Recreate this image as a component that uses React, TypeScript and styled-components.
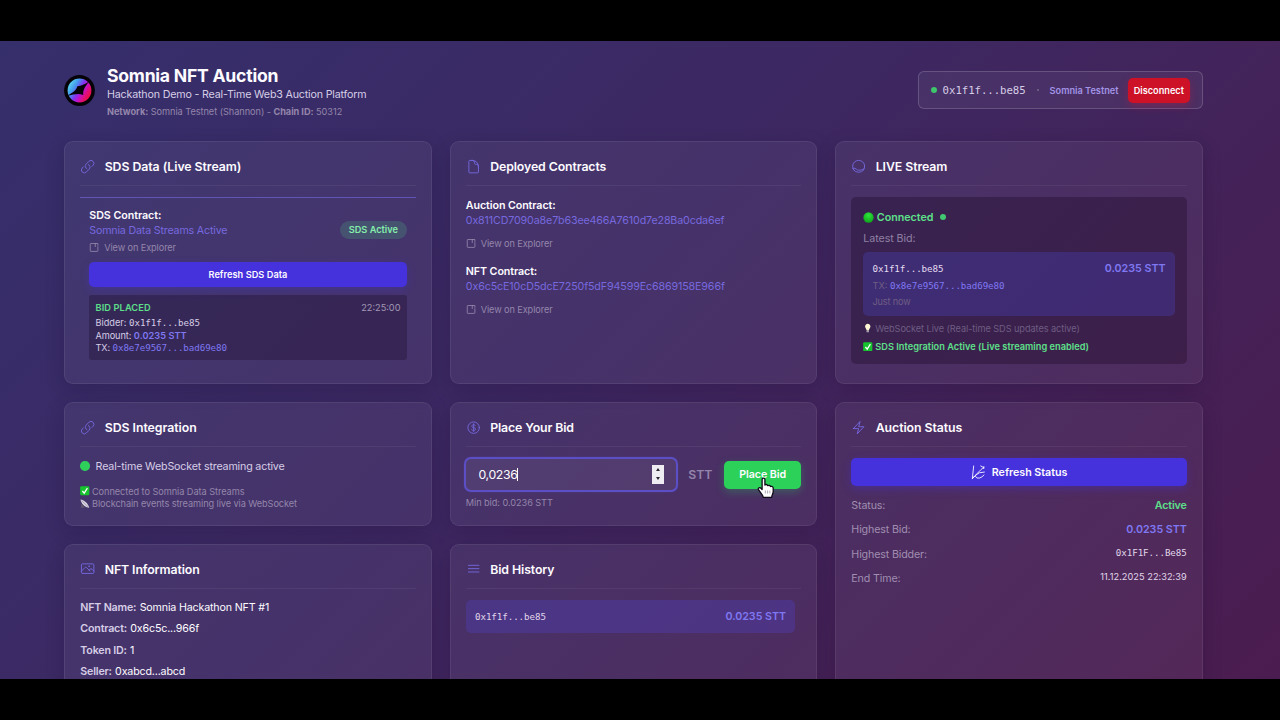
import React from "react";
import styled, { createGlobalStyle, css } from "styled-components";
import {
  HiOutlineBars3,
  HiOutlineBolt,
  HiOutlineCurrencyDollar,
  HiOutlineDocument,
  HiOutlineLink,
  HiOutlinePhoto,
} from "react-icons/hi2";

const color = {
  link: "#7669df",
  accent: "#7f78f2",
  green: "#5ee08a",
  white: "#fdfbff",
  soft: "#d6cde6",
  muted: "#9486aa",
  dim: "#6e5d83",
  indigo: "#4632dc",
};

const GlobalStyle = createGlobalStyle`
  * { box-sizing: border-box; }
  body {
    margin: 0;
    background: #000;
    font-family: Inter, "Liberation Sans", sans-serif;
    color: ${color.white};
    overflow: hidden;
  }
`;

const Letterbox = styled.div`
  height: 720px;
  padding: 41px 0;
  background: #000;
`;

const Page = styled.main`
  height: 638px;
  overflow: hidden;
  padding: 20px 77.4px 0 64.4px;
  background: linear-gradient(135deg, #352f6c 0%, #3d2862 45%, #4b1c4f 100%);
`;

const Header = styled.header`
  display: flex;
  align-items: center;
  justify-content: space-between;
  height: 58px;
  margin-bottom: 22px;
`;

const Brand = styled.div`
  display: flex;
  align-items: center;
  gap: 11.6px;
`;

const BrandText = styled.div`
  padding-top: 4px;
`;

type TextProps = {
  $size?: number;
  $weight?: number;
  $lh?: number;
  $ls?: number;
  $color?: string;
  $mono?: boolean;
};

const textStyle = css<TextProps>`
  font-size: ${(p) => p.$size ?? 10.7}px;
  font-weight: ${(p) => p.$weight ?? 400};
  letter-spacing: ${(p) => p.$ls ?? 0}px;
  color: ${(p) => p.$color ?? color.white};
  white-space: nowrap;
  ${(p) => p.$lh && css`line-height: ${p.$lh}px;`}
  ${(p) => p.$mono && css`font-family: "DejaVu Sans Mono", "Liberation Mono", monospace;`}
`;

const Line = styled.div<TextProps>`${textStyle}`;
const Span = styled.span<TextProps>`${textStyle}`;

const Title = styled.h1`
  margin: 0;
  font-size: 17.6px;
  line-height: 23px;
  font-weight: 700;
  letter-spacing: -0.24px;
`;

const Wallet = styled.div`
  display: flex;
  align-items: center;
  width: 285px;
  height: 38px;
  padding: 0 12px;
  border: 1px solid rgba(255, 255, 255, 0.17);
  border-radius: 6px;
  background: rgba(255, 255, 255, 0.05);
`;

const Dot = styled.i<{ $size: number; $color: string; $ml?: number; $mr?: number }>`
  flex: none;
  display: inline-block;
  width: ${(p) => p.$size}px;
  height: ${(p) => p.$size}px;
  margin-left: ${(p) => p.$ml ?? 0}px;
  margin-right: ${(p) => p.$mr ?? 0}px;
  border-radius: 50%;
  background: ${(p) => p.$color};
`;

const Button = styled.button<{ $bg: string; $glow: string; $h: number; $size: number; $ls?: number }>`
  display: flex;
  align-items: center;
  justify-content: center;
  gap: 7px;
  width: 100%;
  height: ${(p) => p.$h}px;
  padding: 0;
  border: 0;
  border-radius: 5px;
  background: ${(p) => p.$bg};
  box-shadow: 0 3px 9px ${(p) => p.$glow};
  color: ${color.white};
  font-family: inherit;
  font-size: ${(p) => p.$size}px;
  font-weight: 600;
  letter-spacing: ${(p) => p.$ls ?? 0}px;
  white-space: nowrap;
`;

const Disconnect = styled(Button)`
  width: 62px;
  margin-left: 9.6px;
`;

const PlaceBid = styled(Button)`
  width: 77px;
`;

const Grid = styled.div`
  display: grid;
  grid-template-columns: repeat(3, 1fr);
  grid-template-rows: 243px 123.6px 200px;
  column-gap: 18.4px;
  row-gap: 18px;
`;

const Card = styled.section<{ $tall?: boolean }>`
  min-width: 0;
  padding: 15px 14.9px;
  border: 1px solid rgba(255, 255, 255, 0.07);
  border-radius: 9px;
  background: rgba(255, 255, 255, 0.052);
  box-shadow: 0 6px 20px rgba(20, 5, 40, 0.2);
  ${(p) => p.$tall && css`grid-row: span 2;`}
`;

const CardHeader = styled.div`
  display: flex;
  align-items: center;
  gap: 9.1px;
  height: 29px;
  padding-bottom: 9px;
  margin-bottom: 11px;
  border-bottom: 1px solid rgba(255, 255, 255, 0.055);
  color: #7267da;

  svg {
    flex: none;
    width: 15.3px;
    height: 15.3px;
  }
`;

const CardTitle = styled.h2<{ $ls: number }>`
  margin: 0;
  font-size: 12.3px;
  line-height: 19px;
  font-weight: 600;
  letter-spacing: ${(p) => p.$ls}px;
  color: ${color.white};
  white-space: nowrap;
`;

const SdsSection = styled.div`
  padding: 9.5px 9px;
  border-top: 1px solid #6054b4;
`;

const Between = styled.div`
  display: flex;
  align-items: center;
  justify-content: space-between;
`;

const SdsTop = styled(Between)`
  align-items: flex-start;
  margin-bottom: 6px;
`;

const Badge = styled.span`
  margin-top: 13.400px;
  padding: 0 8.8px;
  border-radius: 9px;
  background: rgba(74, 190, 128, 0.22);
  color: #86efac;
  font-size: 9.2px;
  line-height: 18px;
  font-weight: 600;
`;

const Explorer = styled.a`
  display: flex;
  align-items: center;
  gap: 4.4px;
  height: 17px;
  font-size: 9.2px;
  letter-spacing: -0.1px;
  color: ${color.muted};
`;

const LogBox = styled.div`
  height: 65px;
  margin-top: 8px;
  padding: 5.5px 6.2px;
  border-radius: 3px;
  background: rgba(20, 8, 32, 0.29);
`;

const Contract = styled.div`
  height: 66.4px;
  padding-top: 1px;
`;

const ExplorerSpaced = styled(Explorer)`
  margin-top: 5.6px;
`;

const StreamBox = styled.div`
  height: 167px;
  padding: 11px 12px;
  border-radius: 5px;
  background: rgba(24, 4, 28, 0.31);
`;

const WithIcon = styled.div<{ $h: number; $gap: number }>`
  display: flex;
  align-items: center;
  gap: ${(p) => p.$gap}px;
  height: ${(p) => p.$h}px;
`;

const BidBox = styled.div`
  height: 64px;
  margin: 1px 0 3.4px;
  padding: 8px 9.2px;
  border-radius: 5px;
  background: rgba(70, 62, 180, 0.38);
`;

const HistoryRow = styled(Between)`
  height: 33px;
  margin: 1.4px 6px 0 0;
  padding: 0 9.2px;
  border-radius: 5px;
  background: rgba(80, 64, 190, 0.36);
`;

const Live = styled.div`
  display: flex;
  align-items: center;
  gap: 5.8px;
  height: 16px;
  margin: 0 0 11px;
`;

const BidForm = styled.div`
  display: flex;
  align-items: center;
  height: 35px;
  margin: -1px 0 3px -1.4px;
`;

const Field = styled.div`
  display: flex;
  align-items: center;
  width: 213.5px;
  height: 35px;
  padding: 0 12px;
  border: 2px solid #5c4fc6;
  border-radius: 7px;
  background: rgba(255, 255, 255, 0.055);
  box-shadow: 0 0 1px #5c4fc6;
`;

const Caret = styled.i`
  width: 1px;
  height: 13px;
  background: #fff;
`;

const Stepper = styled.div`
  display: flex;
  flex-direction: column;
  align-items: center;
  justify-content: space-between;
  width: 12px;
  height: 19px;
  margin-left: auto;
  padding: 3px 0 4px;
  background: #efedf2;
`;

const Arrow = styled.i<{ $up?: boolean }>`
  border-left: 2.5px solid transparent;
  border-right: 2.5px solid transparent;
  ${(p) => (p.$up ? "border-bottom: 3.5px solid #2a2630;" : "border-top: 3.5px solid #2a2630;")}
`;

const Unit = styled.span`
  width: 46.5px;
  padding-left: 10.6px;
  font-size: 12.3px;
  font-weight: 600;
  letter-spacing: -0.15px;
  color: #9384ab;
`;

const CursorAnchor = styled.div`
  position: relative;

  > svg {
    position: absolute;
    left: 33px;
    top: 16px;
  }
`;

const StatusTop = styled.div`
  margin: 1px 0 7.6px;
`;

const StatusRow = styled(Between)<{ $raise?: number }>`
  height: 24.25px;

  > :last-child {
    margin-bottom: ${(p) => p.$raise ?? 0}px;
  }
`;

const InfoList = styled.div`
  margin-top: -2.4px;
`;

const InfoRow = styled.div`
  display: flex;
  align-items: center;
  gap: 3.3px;
  height: 21.15px;
`;

const Logo = () => (
  <svg width="31" height="31" viewBox="0 0 31 31">
    <defs>
      <linearGradient id="disc" gradientUnits="userSpaceOnUse" x1="5" y1="7" x2="26" y2="20">
        <stop offset="0.05" stopColor="#58d2ee" />
        <stop offset="0.3" stopColor="#4596ee" />
        <stop offset="0.5" stopColor="#7a3cf0" />
        <stop offset="0.66" stopColor="#bb14d4" />
        <stop offset="0.85" stopColor="#e30d78" />
        <stop offset="1" stopColor="#e8104a" />
      </linearGradient>
    </defs>
    <circle cx="15.500" cy="15.500" r="15.400" fill="#050308" />
    <circle cx="15.500" cy="15.500" r="11.900" fill="url(#disc)" />
    <path
      d="M25 6.500C20.800 12 19 14.500 19.200 20C14.500 18 9.500 19.600 3.200 20.800C9.600 17 12 15.500 13.400 11.200C17.500 11 20.500 9.400 25 6.500Z"
      fill="#050308"
    />
  </svg>
);

const OrbIcon = () => (
  <svg viewBox="0 0 24 24" fill="none" stroke="currentColor" strokeWidth="1.500" strokeLinecap="round">
    <path d="M4.500 17.500A9.500 9.500 0 1 1 19.500 17.500" />
    <path d="M2.800 14.500Q7 14 8.500 16T12 17.500H15Q18 17.500 21 14.500" />
    <path d="M4.500 17.500Q7 20.800 12 20.800T19.500 17.500" />
  </svg>
);

const OpenIcon = () => (
  <svg width="10.500" height="10.500" viewBox="0 0 21 21" fill="none" stroke="currentColor" strokeWidth="1.700">
    <path d="M14 3H3.800Q2.500 3 2.500 4.300V17.500Q2.500 18.800 3.800 18.800H16.500Q17.800 18.800 17.800 17.500V8.500" />
    <path d="M12.500 3.500V10M12 3H17.800V7.500" />
  </svg>
);

const RefreshIcon = () => (
  <svg width="14" height="15" viewBox="0 0 42 45" fill="none" stroke="#fff" strokeWidth="2.600" strokeLinecap="round" strokeLinejoin="round">
    <path d="M8 3L4 41L19 25Q27 16 39 6" />
    <path d="M29 3Q34 7 39 6L38 11" />
    <path d="M13 31Q24 20 40 21" />
    <path d="M4 41Q9 30 14 35Q17 41 26 39Q33 37 39 30" />
  </svg>
);

const CheckIcon = () => (
  <svg width="9.500" height="9.500" viewBox="0 0 18 18">
    <rect x="0.300" y="0.300" width="17.400" height="17.400" rx="2.500" fill="#16c22e" />
    <path d="M4.500 9.500L8 13.500L14 4" fill="none" stroke="#fff" strokeWidth="2.400" />
  </svg>
);

const BulbIcon = () => (
  <svg width="9.500" height="10" viewBox="0 0 18 20">
    <path d="M9 1.500A5.600 5.600 0 0 1 12.800 11Q11.800 12.300 11.500 14H6.500Q6.200 12.300 5.200 11A5.600 5.600 0 0 1 9 1.500Z" fill="#fdf6d2" />
    <rect x="6.500" y="14" width="5" height="4.500" rx="1" fill="#a8a2ae" />
  </svg>
);

const FeedIcon = () => (
  <svg width="9.500" height="9.500" viewBox="0 0 18 18">
    <path d="M1 1C7 1 15 8 17.500 16.500C10 16.500 2 9 1 1Z" fill="#d9d5e0" />
    <path d="M2.500 8L1.500 16.500H9.500Z" fill="#5d5368" />
    <path d="M3 3L15.500 15" stroke="#8d8798" strokeWidth="1.200" />
  </svg>
);

const LiveOrb = () => (
  <svg width="11" height="11" viewBox="0 0 22 22">
    <defs>
      <radialGradient id="orb" cx="0.5" cy="0.3" r="0.7">
        <stop offset="0" stopColor="#2fe53c" />
        <stop offset="1" stopColor="#0fa51c" />
      </radialGradient>
    </defs>
    <circle cx="11" cy="11" r="10.300" fill="url(#orb)" />
  </svg>
);

const HandCursor = () => (
  <svg width="18" height="22" viewBox="0 0 18 22">
    <path
      d="M5.100 2.600C5.100 0.600 7.900 0.600 7.900 2.600V8C9 7.100 10.500 7.600 10.700 8.700C11.800 7.900 13.200 8.400 13.400 9.500C14.700 8.900 16.200 9.700 16.200 11.200V14.500C16.200 16.500 15 17.500 14.700 20.300H6.300C5.900 17.800 3.200 15.500 1.500 12.600C0.700 11 2.700 9.900 3.900 11.200L5.100 12.600Z"
      fill="#fff"
      stroke="#100a18"
      strokeWidth="1.300"
      strokeLinejoin="round"
    />
    <path d="M8.300 13.500V16.500M10.600 13.500V16.500M12.900 13.500V16.500" stroke="#8a8292" strokeWidth="0.700" />
  </svg>
);

const Head = ({ icon, title, ls }: { icon: React.ReactNode; title: string; ls: number }) => (
  <CardHeader>
    {icon}
    <CardTitle $ls={ls}>{title}</CardTitle>
  </CardHeader>
);

const contracts = [
  { name: "Auction Contract:", address: "0x811CD7090a8e7b63ee466A7610d7e28Ba0cda6ef", ls: -0.137 },
  { name: "NFT Contract:", address: "0x6c5cE10cD5dcE7250f5dF94599Ec6869158E966f", ls: -0.12 },
];

const nft = [
  ["NFT Name:", "Somnia Hackathon NFT #1"],
  ["Contract:", "0x6c5c...966f"],
  ["Token ID:", "1"],
  ["Seller:", "0xabcd...abcd"],
];

export default function App() {
  return (
    <Letterbox>
      <GlobalStyle />
      <Page>
        <Header>
          <Brand>
            <Logo />
            <BrandText>
              <Title>Somnia NFT Auction</Title>
              <Line $lh={16} $ls={-0.181} $color={color.soft}>Hackathon Demo - Real-Time Web3 Auction Platform</Line>
              <Line $size={9.2} $lh={18} $ls={-0.05} $color={color.muted}>
                <b>Network:</b> Somnia Testnet (Shannon) - <b>Chain ID:</b> 50312
              </Line>
            </BrandText>
          </Brand>
          <Wallet>
            <Dot $size={6} $color="#3fc56c" $mr={6} />
            <Span $mono $ls={-0.05} $color={color.soft}>0x1f1f...be85</Span>
            <Dot $size={2} $color="#75668f" $ml={11} $mr={11} />
            <Span $size={9.2} $weight={600} $color="#a294e6">Somnia Testnet</Span>
            <Disconnect $bg="#cd1126" $glow="rgba(220,20,50,.3)" $h={25} $size={9.2}>Disconnect</Disconnect>
          </Wallet>
        </Header>

        <Grid>
          <Card>
            <Head icon={<HiOutlineLink />} title="SDS Data (Live Stream)" ls={-0.053} />
            <SdsSection>
              <SdsTop>
                <div>
                  <Line $weight={600} $lh={15.5} $ls={-0.05}>SDS Contract:</Line>
                  <Line $lh={16} $ls={-0.19} $color={color.link}>Somnia Data Streams Active</Line>
                  <Explorer>
                    <OpenIcon />
                    View on Explorer
                  </Explorer>
                </div>
                <Badge>SDS Active</Badge>
              </SdsTop>
              <Button $bg={color.indigo} $glow="rgba(70,50,220,.3)" $h={25} $size={9.2} $ls={0.055}>Refresh SDS Data</Button>
              <LogBox>
                <Between>
                  <Line $size={9.2} $weight={600} $lh={13} $ls={0.13} $color={color.green}>BID PLACED</Line>
                  <Line $size={9.2} $lh={13} $color="#a297b5">22:25:00</Line>
                </Between>
                <Line $size={9.2} $lh={17} $color={color.soft}>
                  Bidder: <Span $mono $size={9.2} $ls={-0.08} $color={color.soft}>0x1f1f...be85</Span>
                </Line>
                <Line $size={9.2} $lh={9} $ls={-0.08} $color={color.soft}>
                  Amount: <Span $size={9.2} $weight={600} $ls={0.05} $color={color.accent}>0.0235 STT</Span>
                </Line>
                <Line $size={9.2} $lh={15} $ls={-0.1} $color={color.soft}>
                  TX: <Span $mono $size={9.2} $ls={-0.08} $color={color.accent}>0x8e7e9567...bad69e80</Span>
                </Line>
              </LogBox>
            </SdsSection>
          </Card>

          <Card>
            <Head icon={<HiOutlineDocument />} title="Deployed Contracts" ls={-0.097} />
            {contracts.map((c) => (
              <Contract key={c.name}>
                <Line $weight={600} $lh={15} $ls={-0.09}>{c.name}</Line>
                <Line $lh={16} $ls={c.ls} $color={color.link}>{c.address}</Line>
                <ExplorerSpaced>
                  <OpenIcon />
                  View on Explorer
                </ExplorerSpaced>
              </Contract>
            ))}
          </Card>

          <Card>
            <Head icon={<OrbIcon />} title="LIVE Stream" ls={-0.075} />
            <StreamBox>
              <WithIcon $h={18} $gap={2.5}>
                <LiveOrb />
                <Span $weight={600} $color={color.green}>Connected</Span>
                <Dot $size={6} $color="#43c872" $ml={3.5} />
              </WithIcon>
              <Line $lh={25} $ls={-0.09} $color="#8f80a4">Latest Bid:</Line>
              <BidBox>
                <Between>
                  <Line $mono $size={9.2} $lh={17} $ls={-0.08} $color="#e4dcf0">0x1f1f...be85</Line>
                  <Line $weight={600} $lh={17} $color={color.accent}>0.0235 STT</Line>
                </Between>
                <Line $size={9.2} $lh={17} $color={color.dim}>
                  TX: <Span $mono $size={9.2} $ls={-0.08} $color={color.accent}>0x8e7e9567...bad69e80</Span>
                </Line>
                <Line $size={9.2} $lh={15} $ls={-0.17} $color={color.dim}>Just now</Line>
              </BidBox>
              <WithIcon $h={18} $gap={2.4}>
                <BulbIcon />
                <Span $size={9.2} $ls={-0.067} $color={color.dim}>WebSocket Live (Real-time SDS updates active)</Span>
              </WithIcon>
              <WithIcon $h={18} $gap={2.4}>
                <CheckIcon />
                <Span $size={9.2} $weight={600} $ls={0.036} $color={color.green}>SDS Integration Active (Live streaming enabled)</Span>
              </WithIcon>
            </StreamBox>
          </Card>

          <Card>
            <Head icon={<HiOutlineLink />} title="SDS Integration" ls={-0.03} />
            <Live>
              <Dot $size={9.5} $color="#2fcf5b" />
              <Span $ls={-0.17} $color={color.soft}>Real-time WebSocket streaming active</Span>
            </Live>
            <WithIcon $h={12} $gap={2.2}>
              <CheckIcon />
              <Span $size={9.2} $ls={-0.057} $color={color.muted}>Connected to Somnia Data Streams</Span>
            </WithIcon>
            <WithIcon $h={12.5} $gap={2.2}>
              <FeedIcon />
              <Span $size={9.2} $ls={-0.083} $color={color.muted}>Blockchain events streaming live via WebSocket</Span>
            </WithIcon>
          </Card>

          <Card>
            <Head icon={<HiOutlineCurrencyDollar />} title="Place Your Bid" ls={-0.12} />
            <BidForm>
              <Field>
                <Span $size={12.3} $ls={-0.36}>0,0236</Span>
                <Caret />
                <Stepper>
                  <Arrow $up />
                  <Arrow />
                </Stepper>
              </Field>
              <Unit>STT</Unit>
              <CursorAnchor>
                <PlaceBid $bg="#2bd158" $glow="rgba(40,200,90,.3)" $h={28} $size={10.7} $ls={-0.06}>Place Bid</PlaceBid>
                <HandCursor />
              </CursorAnchor>
            </BidForm>
            <Line $size={9.2} $lh={16} $ls={-0.07} $color={color.muted}>Min bid: 0.0236 STT</Line>
          </Card>

          <Card $tall>
            <Head icon={<HiOutlineBolt />} title="Auction Status" ls={-0.064} />
            <StatusTop>
              <Button $bg={color.indigo} $glow="rgba(70,50,220,.35)" $h={28} $size={10.7} $ls={-0.025}>
                <RefreshIcon />
                Refresh Status
              </Button>
            </StatusTop>
            <StatusRow>
              <Span $ls={-0.15} $color="#a08eb0">Status:</Span>
              <Span $weight={600} $ls={-0.134} $color={color.green}>Active</Span>
            </StatusRow>
            <StatusRow>
              <Span $ls={-0.15} $color="#a08eb0">Highest Bid:</Span>
              <Span $weight={600} $ls={-0.03} $color={color.accent}>0.0235 STT</Span>
            </StatusRow>
            <StatusRow $raise={4}>
              <Span $ls={-0.15} $color="#a08eb0">Highest Bidder:</Span>
              <Span $mono $size={9.2} $ls={-0.08} $color="#e0d6ea">0x1F1F...Be85</Span>
            </StatusRow>
            <StatusRow $raise={3}>
              <Span $ls={-0.15} $color="#a08eb0">End Time:</Span>
              <Span $size={9.2} $ls={0.04} $color="#e0d6ea">11.12.2025 22:32:39</Span>
            </StatusRow>
          </Card>

          <Card>
            <Head icon={<HiOutlinePhoto />} title="NFT Information" ls={-0.093} />
            <InfoList>
              {nft.map(([label, value]) => (
                <InfoRow key={label}>
                  <Span $weight={600} $ls={-0.19} $color={color.soft}>{label}</Span>
                  <Span $ls={-0.17}>{value}</Span>
                </InfoRow>
              ))}
            </InfoList>
          </Card>

          <Card>
            <Head icon={<HiOutlineBars3 />} title="Bid History" ls={-0.09} />
            <HistoryRow>
              <Span $mono $size={9.2} $ls={-0.08} $color="#e0d6ea">0x1f1f...be85</Span>
              <Span $weight={600} $ls={-0.03} $color={color.accent}>0.0235 STT</Span>
            </HistoryRow>
          </Card>
        </Grid>
      </Page>
    </Letterbox>
  );
}
